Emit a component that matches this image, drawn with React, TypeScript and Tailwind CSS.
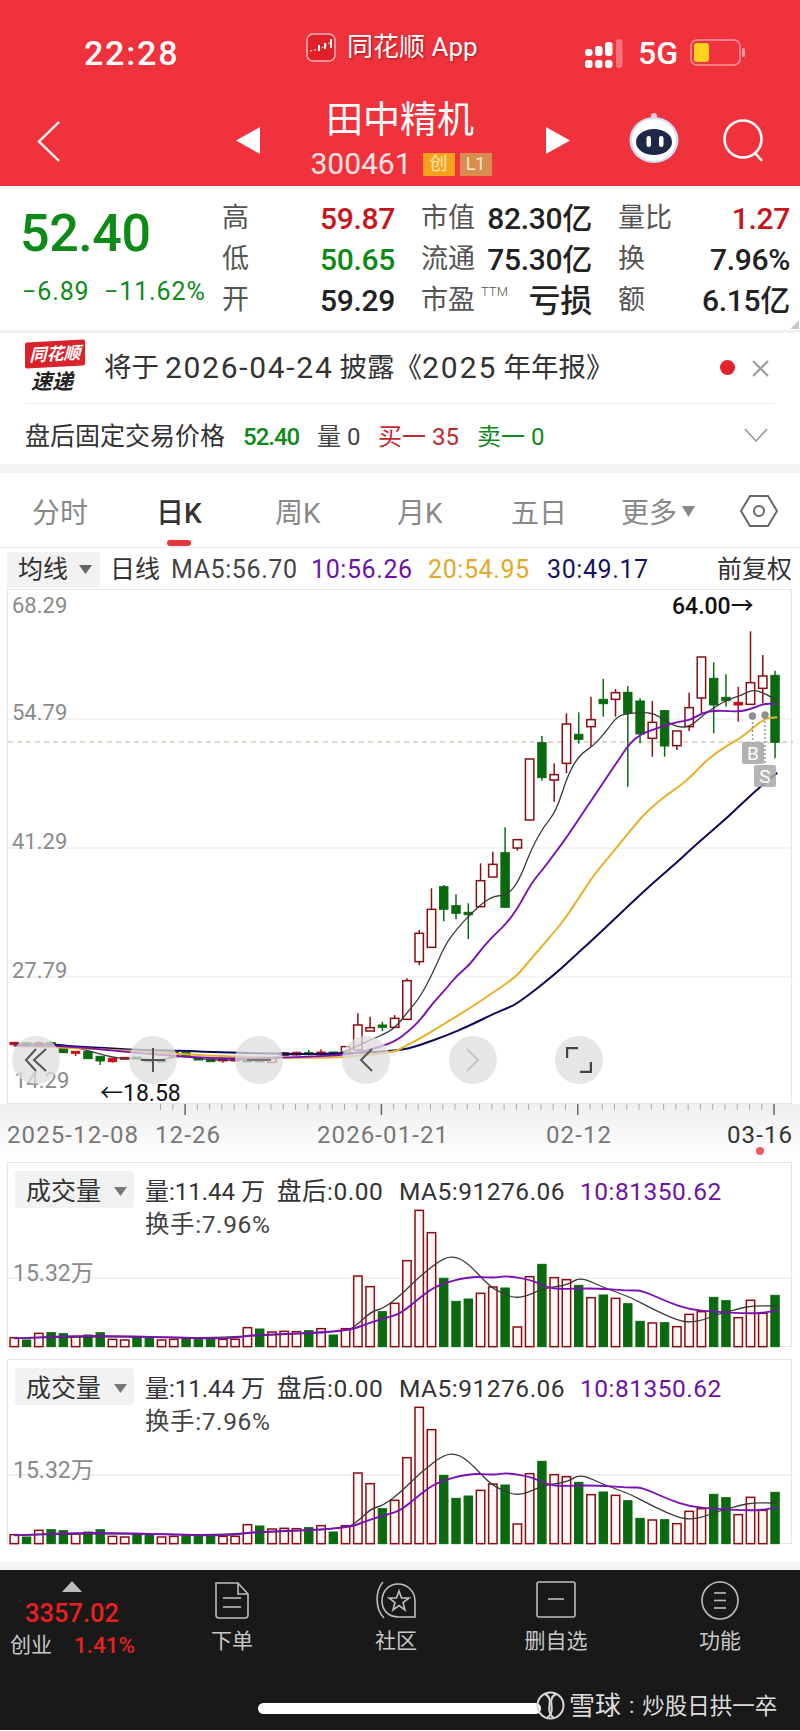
import React from "react";

const z3 = (y: number) => 590 + y / 3;
const z5 = (y: number) => 880 + y / 3;
const cx = (i: number) => 13.3 + 12.27 * i;
const px = (x: number) => 400 + x / 3;

type C = [number, "r" | "g" | "f", number, number, number, number];
const raw3: C[] = [
  [62, "g", 256, 457, 242, 505], [61, "r", 258, 295, 195, 340], [60, "r", 278, 343, 124, 343],
  [59, "f", 337, 345, 290, 395], [58, "g", 322, 332, 253, 350], [57, "g", 265, 345, 217, 430],
  [56, "r", 201, 324, 201, 370], [55, "r", 353, 410, 308, 423], [54, "r", 423, 467, 423, 480],
  [53, "g", 362, 468, 362, 500], [52, "r", 397, 445, 333, 500], [51, "g", 333, 432, 325, 460],
  [50, "g", 307, 370, 288, 590], [49, "r", 308, 328, 297, 380], [48, "g", 328, 341, 267, 380],
  [47, "r", 389, 410, 320, 470], [46, "g", 433, 448, 367, 461], [45, "r", 402, 520, 370, 550],
  [44, "r", 554, 570, 520, 635], [43, "g", 458, 563, 438, 572], [42, "r", 507, 690, 507, 690],
  [41, "r", 749, 774, 749, 782], [40, "g", 788, 952, 712, 952], [39, "r", 823, 861, 785, 861],
  [38, "r", 872, 950, 820, 950],
];
const raw5: C[] = [
  [37, "g", 97, 104, 70, 177], [36, "g", 77, 100, 43, 118], [35, "g", 20, 88, 15, 124],
  [34, "r", 88, 202, 25, 202], [33, "r", 160, 245, 150, 255], [32, "r", 302, 418, 295, 418],
  [31, "r", 415, 442, 405, 442], [30, "g", 435, 442, 425, 453], [29, "r", 443, 453, 410, 453],
  [28, "r", 435, 510, 400, 510], [27, "r", 500, 520, 500, 520], [26, "g", 516, 524, 516, 524],
  [25, "f", 516, 525, 508, 528], [24, "g", 518, 524, 510, 526], [23, "f", 517, 525, 515, 527],
  [22, "f", 518, 526, 518, 526], [21, "r", 535, 547, 535, 547], [20, "g", 538, 546, 538, 546],
  [19, "g", 538, 546, 538, 546], [18, "f", 535, 543, 535, 545], [17, "f", 537, 543, 537, 548],
  [16, "g", 537, 545, 537, 545], [15, "g", 533, 540, 533, 540], [14, "g", 518, 530, 518, 530],
  [13, "r", 517, 528, 517, 528], [12, "g", 540, 546, 540, 546], [11, "g", 538, 545, 538, 545],
  [10, "g", 531, 537, 531, 537], [9, "f", 532, 538, 532, 538], [8, "f", 535, 545, 535, 548],
  [7, "g", 529, 543, 529, 555], [6, "g", 515, 536, 515, 536], [5, "f", 514, 520, 514, 528],
  [4, "g", 505, 518, 505, 518], [3, "g", 488, 495, 484, 495], [2, "f", 488, 498, 484, 498],
  [1, "g", 488, 500, 488, 500], [0, "f", 487, 494, 487, 500],
];

// Smooth curve through the midpoints, as the chart's moving averages are drawn
const line = (pts: [number, number][]) => {
  let d = `M${pts[0][0]} ${pts[0][1]}`;
  for (let i = 1; i < pts.length - 1; i++) {
    const mx = (pts[i][0] + pts[i + 1][0]) / 2;
    const my = (pts[i][1] + pts[i + 1][1]) / 2;
    d += ` Q${pts[i][0]} ${pts[i][1]} ${mx} ${my}`;
  }
  const last = pts[pts.length - 1];
  return d + ` L${last[0]} ${last[1]}`;
};

const ma5 = line([
  ...[492, 492, 492, 492, 495, 502, 512, 522, 532, 535, 535, 540, 540, 530, 530, 535, 540, 540, 540, 540, 540, 535, 525, 522, 522, 522, 522, 515, 497, 480, 465, 445].map(
    (y, i) => [cx(i), z5(y)] as [number, number]
  ),
  [px(21), z5(395)], [px(58), z5(350)], [px(95), z5(280)], [px(132), z5(195)], [px(169), z5(145)], [px(206), z5(105)],
  [px(243), z5(70)], [px(280), z5(47)], [px(317), z5(47)], [px(353), z3(875)], [px(392), z3(775)], [px(428), z3(710)],
  [px(465), z3(665)], [px(502), z3(550)], [px(538), z3(492)], [px(575), z3(470)], [px(612), z3(428)], [px(649), z3(378)],
  [px(686), z3(370)], [px(723), z3(367)], [px(760), z3(370)], [px(797), z3(395)], [px(833), z3(413)], [px(870), z3(408)],
  [px(907), z3(375)], [px(944), z3(350)], [px(981), z3(328)], [px(1018), z3(318)], [px(1055), z3(298)], [px(1092), z3(310)], [px(1129), z3(333)],
]);
const ma10 = line([
  [cx(0), z5(497)], [cx(4), z5(497)], [cx(8), z5(512)], [cx(12), z5(525)], [cx(16), z5(535)], [cx(20), z5(536)], [cx(24), z5(530)],
  [cx(27), z5(525)], [cx(29), z5(510)], [cx(31), z5(485)], [px(21), z5(455)], [px(58), z5(420)], [px(95), z5(370)], [px(132), z5(330)],
  [px(169), z5(285)], [px(206), z5(255)], [px(243), z5(205)], [px(280), z5(165)], [px(317), z5(130)], [px(353), z3(950)], [px(392), z3(878)],
  [px(428), z3(835)], [px(465), z3(785)], [px(502), z3(735)], [px(538), z3(680)], [px(575), z3(625)], [px(612), z3(570)], [px(649), z3(515)],
  [px(686), z3(460)], [px(723), z3(430)], [px(760), z3(418)], [px(797), z3(405)], [px(833), z3(395)], [px(870), z3(390)], [px(907), z3(367)],
  [px(944), z3(362)], [px(981), z3(363)], [px(1018), z3(365)], [px(1055), z3(355)], [px(1092), z3(340)], [px(1129), z3(343)],
]);
const ma20 = line([
  [cx(0), z5(497)], [cx(8), z5(508)], [cx(16), z5(528)], [cx(22), z5(533)], [cx(27), z5(533)], [cx(31), z5(515)], [px(0), z5(505)],
  [px(58), z5(475)], [px(132), z5(430)], [px(206), z5(385)], [px(280), z5(335)], [px(317), z5(310)], [px(350), z5(285)], [px(400), z5(225)],
  [px(465), z5(150)], [px(500), z5(105)], [px(575), z3(860)], [px(612), z3(815)], [px(649), z3(770)], [px(686), z3(725)], [px(723), z3(680)],
  [px(760), z3(645)], [px(797), z3(615)], [px(833), z3(590)], [px(870), z3(560)], [px(907), z3(520)], [px(944), z3(490)], [px(981), z3(465)],
  [px(1018), z3(445)], [px(1055), z3(415)], [px(1092), z3(385)], [px(1129), z3(382)],
]);
const ma30 = line([
  [53, z5(495)], [130, z5(510)], [173, z5(512)], [233, z5(518)], [283, z5(522)], [340, z5(522)], [400, z5(512)],
  [px(58), z5(495)], [px(132), z5(468)], [px(206), z5(437)], [px(280), z5(400)], [px(317), z5(385)], [px(350), z5(370)], [px(460), z5(285)],
  [px(540), z5(210)], [px(580), z5(175)], [px(690), z5(70)], [px(760), z3(875)], [px(830), z3(815)], [px(860), z3(787)], [px(900), z3(751)],
  [px(980), z3(682)], [px(1060), z3(605)], [px(1129), z3(548)],
]);

const volTops: [string, number][] = [
  ["r", 533], ["g", 540], ["r", 520], ["g", 518], ["g", 521], ["r", 530], ["g", 525], ["g", 518], ["r", 538], ["r", 540], ["g", 530], ["g", 530],
  ["r", 540], ["r", 538], ["g", 535], ["g", 538], ["g", 537], ["r", 538], ["r", 538], ["r", 503], ["g", 507], ["r", 516], ["r", 514], ["r", 515],
  ["g", 512], ["r", 506], ["g", 525], ["r", 506], ["r", 348], ["r", 380], ["g", 455], ["r", 430], ["r", 302], ["r", 151], ["r", 218], ["g", 355],
  ["g", 424], ["g", 417], ["r", 400], ["r", 381], ["g", 384], ["r", 501], ["r", 350], ["g", 313], ["r", 353], ["r", 359], ["g", 376], ["r", 413],
  ["g", 405], ["r", 415], ["g", 431], ["g", 484], ["r", 489], ["g", 488], ["r", 500], ["r", 463], ["r", 455], ["g", 412], ["g", 422], ["r", 473],
  ["r", 421], ["r", 460], ["g", 406],
];
const vy = (y: number) => 1160 + y / 3;
const l4 = (x: number) => x / 3;
const vol5 = line(
  ([[40, 535], [300, 528], [600, 535], [800, 525], [1037, 515], [1074, 490], [1110, 455], [1147, 445]] as [number, number][])
    .map(([x, y]) => [l4(x), vy(y)] as [number, number])
    .concat(
      ([[0, 405], [60, 345], [130, 292], [169, 291], [206, 315], [265, 378], [300, 398], [353, 418], [428, 385], [500, 375], [538, 350], [612, 385], [686, 410], [760, 450], [833, 482], [870, 487], [907, 480], [944, 465], [1018, 445], [1055, 437], [1129, 438]] as [number, number][]).map(([x, y]) => [px(x), vy(y)] as [number, number])
    )
);
const vol10 = line(
  ([[40, 535], [150, 530], [300, 527], [600, 535], [700, 535], [750, 525], [1037, 515], [1100, 490], [1160, 472]] as [number, number][])
    .map(([x, y]) => [l4(x), vy(y)] as [number, number])
    .concat(
      ([[0, 460], [60, 410], [110, 375], [206, 349], [280, 354], [317, 347], [392, 360], [428, 378], [465, 388], [575, 384], [686, 392], [723, 391], [797, 425], [870, 450], [944, 455], [1055, 462], [1129, 452]] as [number, number][]).map(([x, y]) => [px(x), vy(y)] as [number, number])
    )
);

function Candle({ c, f }: { c: C; f: (y: number) => number }) {
  const [i, t, top, bot, wt, wb] = c;
  const x = cx(i);
  const col = t === "g" ? "#0b6a10" : t === "f" ? "#c20f18" : "#8a0d12";
  const fill = t === "r" ? "#ffffff" : col;
  return (
    <g>
      <line x1={x} x2={x} y1={f(wt)} y2={f(wb)} stroke={col} strokeWidth={1.5} />
      <rect x={x - 4.2} y={f(top)} width={8.4} height={Math.max(f(bot) - f(top), 2)} fill={fill} stroke={col} strokeWidth={t === "r" ? 1.5 : 1} />
    </g>
  );
}

function KChart() {
  return (
    <svg className="absolute inset-0" width={785} height={515} viewBox="7 590 785 515">
      {[719, 848, 977].map((y) => (
        <line key={y} x1={7} x2={792} y1={y} y2={y} stroke="#e8e8e8" strokeWidth={1} />
      ))}
      <line x1={7} x2={792} y1={742} y2={742} stroke="#c2ad94" strokeWidth={1} strokeDasharray="5 4" />
      {raw5.map((c) => (
        <Candle key={c[0]} c={c} f={z5} />
      ))}
      {raw3.map((c) => (
        <Candle key={c[0]} c={c} f={z3} />
      ))}
      <path d={ma5} fill="none" stroke="#3a3a3a" strokeWidth={1.3} />
      <path d={ma30} fill="none" stroke="#0a0a58" strokeWidth={2} />
      <path d={ma20} fill="none" stroke="#e6b12c" strokeWidth={2} />
      <path d={ma10} fill="none" stroke="#7a10b4" strokeWidth={1.9} />
      <line x1={751.5} x2={751.5} y1={718} y2={745} stroke="#999" strokeWidth={1.5} strokeDasharray="2 2" />
      <line x1={764} x2={764} y1={717} y2={768} stroke="#999" strokeWidth={1.5} strokeDasharray="2 2" />
      <circle cx={751.5} cy={716} r={3.7} fill="#8e8e8e" />
      <circle cx={764} cy={715} r={3.7} fill="#8e8e8e" />
      <rect x={741} y={742} width={22} height={22} rx={2} fill="#a8a8a8" fillOpacity={0.9} />
      <text x={752} y={760} textAnchor="middle" fontSize={19} fill="#fff" fontFamily="Roboto">B</text>
      <rect x={753} y={765} width={22} height={22} rx={2} fill="#a8a8a8" fillOpacity={0.85} />
      <text x={764} y={783} textAnchor="middle" fontSize={19} fill="#fff" fontFamily="Roboto">S</text>
    </svg>
  );
}

function Ticks() {
  const items = [];
  for (let i = 12; i <= 62; i++) {
    const major = (i - 14) % 16 === 0;
    items.push(
      <line key={i} x1={cx(i)} x2={cx(i)} y1={0} y2={major ? 11 : 6} stroke={major ? "#666" : "#aaa"} strokeWidth={major ? 1.5 : 1} />
    );
  }
  return (
    <svg className="absolute inset-0" width={800} height={55}>
      {items}
    </svg>
  );
}

function VolChart() {
  return (
    <svg className="absolute inset-0" width={785} height={185} viewBox="7 1163 785 185">
      <line x1={7} x2={792} y1={1278} y2={1278} stroke="#e4e4e4" strokeWidth={1} />
      {volTops.map(([t, top], i) => (
        <rect
          key={i}
          x={cx(i) - 4.2}
          y={vy(top)}
          width={8.4}
          height={vy(560) - vy(top)}
          fill={t === "g" ? "#0b6a10" : "#fff6f6"}
          stroke={t === "g" ? "#0b6a10" : "#8a0d12"}
          strokeWidth={t === "g" ? 1 : 1.5}
        />
      ))}
      <path d={vol5} fill="none" stroke="#3a3a3a" strokeWidth={1.3} />
      <path d={vol10} fill="none" stroke="#7a10b4" strokeWidth={1.9} />
    </svg>
  );
}

function VolPanel() {
  return (
    <div className="relative h-[185px] w-[785px] border border-[#e6e6e6] bg-white">
      <VolChart />
      <div className="absolute left-[7px] top-[8px] flex h-[37px] w-[119px] items-center rounded-[4px] bg-[#f2f2f2] pl-[11px] pt-[3px] text-[25px] leading-none text-[#333]">
        成交量
        <svg className="ml-[13px]" width={13} height={9}><polygon points="0,0 13,0 6.5,9" fill="#777" /></svg>
      </div>
      <div className="absolute left-[137px] top-[14px] flex text-[24.5px] leading-[30px] tracking-[0.5px] text-[#333]">
        <span className="w-[132px] text-[24px] tracking-normal">量:11.44 万</span>
        <span className="w-[122px]">盘后:0.00</span>
        <span className="w-[181px]">MA5:91276.06</span>
        <span className="text-[#6d12a6]">10:81350.62</span>
      </div>
      <div className="absolute left-[137px] top-[47px] text-[24.5px] leading-[30px] tracking-[0.6px] text-[#444]">换手:7.96%</div>
      <div className="absolute left-[5px] top-[96px] text-[23px] leading-[30px] text-[#8a8a8a]">15.32万</div>
    </div>
  );
}

function Cell({ label, value, color, big }: { label: React.ReactNode; value: string; color: string; big?: boolean }) {
  return (
    <div className="flex items-center justify-between">
      <span className="text-[27px] leading-none text-[#555]">{label}</span>
      <span className={`${big ? "text-[32px]" : "text-[30px]"} font-medium leading-none tracking-[-0.3px] ${color}`}>{value}</span>
    </div>
  );
}

function RoundBtn({ className, children }: { className: string; children: React.ReactNode }) {
  return (
    <div className={`absolute top-[446px] flex h-[48px] w-[48px] items-center justify-center rounded-full bg-[#dedede]/75 ${className}`}>
      {children}
    </div>
  );
}

export default function App() {
  return (
    <div className="relative h-[1731px] w-[800px] overflow-hidden bg-white [font-family:Roboto,'Noto_Sans_CJK_SC',sans-serif]">
      {/* red header */}
      <header className="relative h-[186px] bg-[#ef323c] text-white">
        <div className="relative h-[92px]">
          <span className="absolute left-[84px] top-[33px] text-[34px] font-medium leading-[40px] tracking-[1.8px]">22:28</span>
          <div className="absolute left-[306px] top-[32px] flex items-center">
            <svg width={30} height={29} viewBox="0 0 30 29">
              <rect x={1} y={1} width={28} height={27} rx={6} fill="#e02029" stroke="#f9b0b4" strokeWidth={1.5} />
              <polyline points="4,18 9,17 14,16 19,13 25,9" fill="none" stroke="#fff" strokeWidth={1} strokeDasharray="2 2" />
              <rect x={12} y={12} width={2} height={6} fill="#fff" />
              <rect x={18} y={10} width={2} height={6} fill="#fff" />
              <rect x={24} y={6} width={2} height={9} fill="#fff" />
            </svg>
            <span className="ml-[11px] whitespace-nowrap text-[26px] leading-[30px] [text-shadow:1px_1px_2px_rgba(90,0,0,0.5)]">同花顺 App</span>
          </div>
          <svg className="absolute left-[585px] top-[39px]" width={38} height={29}>
            {[0, 1, 2].map((k) => (
              <rect key={k} x={k * 10} y={21} width={7.5} height={8} rx={3} fill="#fff" />
            ))}
            <rect x={0} y={10} width={7.5} height={7} rx={3} fill="#fff" />
            <rect x={10} y={7} width={7.5} height={10} rx={3} fill="#fff" />
            <rect x={20} y={3} width={7.5} height={14} rx={3} fill="#fff" />
            <rect x={31} y={0} width={6.5} height={29} rx={3} fill="#f77379" />
          </svg>
          <span className="absolute left-[638px] top-[33px] text-[32px] font-medium leading-[40px]">5G</span>
          <svg className="absolute left-[690px] top-[39px]" width={56} height={28}>
            <rect x={1} y={1} width={49} height={25} rx={6} fill="none" stroke="#f79a9e" strokeWidth={1.5} />
            <rect x={4} y={4} width={15} height={19} rx={3} fill="#ffd21f" />
            <rect x={52} y={9} width={3} height={9} rx={1.5} fill="#f79a9e" />
          </svg>
        </div>
        <div className="relative h-[94px]">
          <svg className="absolute left-[37px] top-[29px]" width={24} height={41} fill="none" stroke="#fff" strokeWidth={2.4}>
            <polyline points="22,1 2,20.5 22,40" />
          </svg>
          <svg className="absolute left-[236px] top-[35px]" width={24} height={27}><polygon points="24,0 24,27 0,13.5" fill="#fff" /></svg>
          <svg className="absolute left-[546px] top-[35px]" width={24} height={27}><polygon points="0,0 24,13.5 0,27" fill="#fff" /></svg>
          <div className="flex flex-col items-center">
            <span className="mt-[7px] text-[37px] leading-[44px]">田中精机</span>
            <div className="ml-[2px] mt-[4px] flex items-center">
              <span className="text-[30px] leading-[34px] text-[#fde4e4]">300461</span>
              <span className="ml-[11px] flex h-[23px] w-[32px] items-center justify-center bg-[#f8a11f] text-[18px] leading-none text-[#ffe9b8]">创</span>
              <span className="ml-[5px] flex h-[23px] w-[32px] items-center justify-center bg-[#d98c4e] text-[18px] leading-none text-[#ffe9d0]">L1</span>
            </div>
          </div>
          <svg className="absolute left-[628px] top-[20px]" width={52} height={56} viewBox="0 0 52 56">
            <circle cx={26} cy={4} r={3} fill="#f4c8d4" />
            <line x1={26} y1={5} x2={26} y2={10} stroke="#e8e8f4" strokeWidth={2} />
            <ellipse cx={26} cy={28} rx={24.5} ry={23} fill="#cfdcf8" />
            <ellipse cx={26} cy={28} rx={22} ry={21} fill="#fff" />
            <ellipse cx={26} cy={30} rx={18} ry={13} fill="#1d2748" />
            <rect x={18.5} y={24} width={4.5} height={11} rx={2.2} fill="#fff" />
            <rect x={31} y={24} width={4.5} height={11} rx={2.2} fill="#fff" />
          </svg>
          <svg className="absolute left-[722px] top-[27px]" width={44} height={44} fill="none" stroke="#fff" strokeWidth={2.6}>
            <circle cx={21} cy={20} r={18.5} />
            <line x1={33} y1={34} x2={40} y2={42} />
          </svg>
        </div>
      </header>

      {/* quote */}
      <section className="relative flex h-[144px] pt-[10px]">
        <div className="w-[222px] pl-[20px]">
          <div className="mt-[6px] text-[52px] font-medium leading-[64px] tracking-[-0.4px] text-[#0d8a17]">52.40</div>
          <div className="ml-[2px] mt-[11px] flex text-[25px] leading-[30px] tracking-[0.9px] text-[#0d8a17]">
            <span className="w-[82px]">−6.89</span>
            <span>−11.62%</span>
          </div>
        </div>
        <div className="mt-[2px] grid h-[123px] grid-cols-[173px_171px_172px] grid-rows-3 gap-x-[26px]">
          <Cell label="高" value="59.87" color="text-[#c8161d]" />
          <Cell label="市值" value="82.30亿" color="text-[#222]" />
          <Cell label="量比" value="1.27" color="text-[#c8161d]" />
          <Cell label="低" value="50.65" color="text-[#0d8a17]" />
          <Cell label="流通" value="75.30亿" color="text-[#222]" />
          <Cell label="换" value="7.96%" color="text-[#222]" />
          <Cell label="开" value="59.29" color="text-[#222]" />
          <Cell
            label={
              <span className="flex items-start">
                市盈<span className="ml-[6px] text-[13px] font-light leading-[10px] text-[#555]">TTM</span>
              </span>
            }
            value="亏损"
            color="text-[#222]"
            big
          />
          <Cell label="额" value="6.15亿" color="text-[#222]" />
        </div>
        <svg className="absolute bottom-[1px] right-[1px]" width={9} height={9}><polygon points="9,0 9,9 0,9" fill="#c8c8c8" /></svg>
      </section>

      {/* notice */}
      <section className="border-t-[3px] border-[#f0f0f0]">
        <div className="relative mx-[25px] flex h-[71px] items-center border-b border-[#ececec]">
          <div className="relative h-[54px] w-[62px]">
            <div className="flex h-[26px] w-[60px] -skew-y-3 items-center justify-center rounded-[2px] bg-[#d9232b] text-[17px] font-bold italic leading-none text-white">同花顺</div>
            <div className="mt-[3px] pl-[6px] text-[21px] font-bold italic leading-[24px] text-[#222]">速递</div>
          </div>
          <span className="ml-[17px] flex items-center whitespace-nowrap text-[27.5px] leading-[34px] text-[#333]">
            将于
            <span className="mx-[6px] text-[30px] tracking-[1.7px]">2026-04-24</span>
            披露《
            <span className="text-[30px] tracking-[2px]">2025</span>
            <span className="ml-[6px]">年年报》</span>
          </span>
          <span className="absolute left-[695px] top-[27px] h-[15px] w-[15px] rounded-full bg-[#e3232c]" />
          <svg className="absolute left-[727px] top-[27px]" width={17} height={17} stroke="#999" strokeWidth={2}>
            <line x1={1} y1={1} x2={16} y2={16} />
            <line x1={16} y1={1} x2={1} y2={16} />
          </svg>
        </div>
        <div className="relative flex h-[60px] items-center pl-[25px] pt-[5px] text-[24px] leading-none">
          <span className="w-[218px] text-[25px] text-[#333]">盘后固定交易价格</span>
          <span className="w-[74px] font-medium tracking-[-1px] text-[#0d8a17]">52.40</span>
          <span className="w-[61px] text-[#444]">量 0</span>
          <span className="w-[99px] text-[#c0282d]">买一 35</span>
          <span className="text-[#0d8a17]">卖一 0</span>
          <svg className="absolute left-[744px] top-[24px]" width={24} height={14} fill="none" stroke="#999" strokeWidth={1.6}>
            <polyline points="1,1 12,13 23,1" />
          </svg>
        </div>
      </section>
      <div className="h-[9px] bg-[#f3f3f3]" />

      {/* tabs */}
      <nav className="relative h-[75px] border-b border-[#e8e8e8] text-[28px] leading-none text-[#888]">
        <span className="absolute left-[32px] top-[27px]">分时</span>
        <span className="absolute left-[156px] top-[27px] font-medium text-[#333]">日K</span>
        <span className="absolute left-[167px] top-[67px] h-[6px] w-[24px] rounded-full bg-[#e8353c]" />
        <span className="absolute left-[275px] top-[27px]">周K</span>
        <span className="absolute left-[397px] top-[27px]">月K</span>
        <span className="absolute left-[511px] top-[27px]">五日</span>
        <span className="absolute left-[621px] top-[27px]">更多</span>
        <svg className="absolute left-[682px] top-[33px]" width={13} height={11}><polygon points="0,0 13,0 6.5,11" fill="#888" /></svg>
        <svg className="absolute left-[740px] top-[21px]" width={38} height={34} fill="none" stroke="#666" strokeWidth={2}>
          <polygon points="10,2 28,2 37,17 28,32 10,32 1,17" />
          <circle cx={19} cy={17} r={5} />
        </svg>
      </nav>

      {/* MA row */}
      <div className="relative flex h-[41px] items-center pl-[7px] pt-[2px] text-[25px] leading-none text-[#333]">
        <div className="flex h-[36px] w-[93px] items-center rounded-[2px] bg-[#f2f2f2] pl-[11px]">
          均线
          <svg className="ml-[11px]" width={13} height={9}><polygon points="0,0 13,0 6.5,9" fill="#666" /></svg>
        </div>
        <span className="ml-[10px] w-[61px]">日线</span>
        <span className="w-[140px] tracking-[0.6px] text-[#444]">MA5:56.70</span>
        <span className="w-[117px] tracking-[0.6px] text-[#6d12a6]">10:56.26</span>
        <span className="w-[119px] tracking-[0.6px] text-[#e0a92b]">20:54.95</span>
        <span className="tracking-[0.6px] text-[#14145e]">30:49.17</span>
        <span className="absolute left-[717px]">前复权</span>
      </div>

      {/* K chart */}
      <div className="pl-[7px]">
        <div className="relative h-[515px] w-[785px] border border-[#e6e6e6] bg-white">
          <KChart />
          <span className="absolute left-[4px] top-[2px] text-[22px] leading-[28px] text-[#8a8a8a]">68.29</span>
          <span className="absolute left-[4px] top-[109px] text-[22px] leading-[28px] text-[#8a8a8a]">54.79</span>
          <span className="absolute left-[4px] top-[238px] text-[22px] leading-[28px] text-[#8a8a8a]">41.29</span>
          <span className="absolute left-[4px] top-[367px] text-[22px] leading-[28px] text-[#8a8a8a]">27.79</span>
          <span className="absolute left-[6px] top-[477px] text-[22px] leading-[28px] text-[#8a8a8a]">14.29</span>
          <span className="absolute left-[664px] top-[3px] text-[23px] font-medium leading-[28px] text-[#111]">64.00→</span>
          <span className="absolute left-[92px] top-[490px] text-[23px] leading-[28px] text-[#111]">←18.58</span>

          <RoundBtn className="left-[4px]">
            <svg width={24} height={24} fill="none" stroke="#555" strokeWidth={2}>
              <polyline points="12,1 2,12 12,23" />
              <polyline points="22,1 10,12 22,23" />
            </svg>
          </RoundBtn>
          <RoundBtn className="left-[121px]">
            <svg width={24} height={24} stroke="#555" strokeWidth={2}>
              <line x1={12} y1={0} x2={12} y2={24} />
              <line x1={0} y1={12} x2={24} y2={12} />
            </svg>
          </RoundBtn>
          <RoundBtn className="left-[227px]">
            <svg width={24} height={4} stroke="#777" strokeWidth={2}>
              <line x1={0} y1={2} x2={24} y2={2} />
            </svg>
          </RoundBtn>
          <RoundBtn className="left-[334px]">
            <svg width={14} height={24} fill="none" stroke="#555" strokeWidth={2}>
              <polyline points="13,1 2,12 13,23" />
            </svg>
          </RoundBtn>
          <RoundBtn className="left-[441px]">
            <svg width={14} height={24} fill="none" stroke="#c4c4c4" strokeWidth={2}>
              <polyline points="1,1 12,12 1,23" />
            </svg>
          </RoundBtn>
          <RoundBtn className="left-[547px]">
            <svg width={26} height={26} fill="none" stroke="#444" strokeWidth={2.4}>
              <polyline points="1,11 1,1 12,1" />
              <polyline points="25,15 25,25 14,25" />
            </svg>
          </RoundBtn>
        </div>
      </div>

      {/* time axis */}
      <div className="relative h-[55px] bg-gradient-to-b from-[#efefef] to-white text-[24px] leading-[28px] tracking-[1.1px] text-[#777]">
        <Ticks />
        <span className="absolute left-[7px] top-[17px]">2025-12-08</span>
        <span className="absolute left-[155px] top-[17px]">12-26</span>
        <span className="absolute left-[317px] top-[17px]">2026-01-21</span>
        <span className="absolute left-[546px] top-[17px]">02-12</span>
        <span className="absolute left-[727px] top-[17px] text-[#333]">03-16</span>
        <span className="absolute left-[756px] top-[43px] h-[8px] w-[8px] rounded-full bg-[#ee5b63]" />
      </div>

      {/* volume panels */}
      <div className="flex flex-col gap-[12px] pl-[7px] pt-[3px]">
        <VolPanel />
        <VolPanel />
      </div>
      <div className="mt-[18px] h-[8px] bg-[#f3f3f3]" />

      {/* bottom bar */}
      <footer className="relative h-[160px] bg-[#191919] text-[#c8c8c8]">
        <div className="grid grid-cols-[146px_172px_156px_164px_160px]">
          <div className="relative h-[90px]">
            <svg className="absolute left-[62px] top-[11px]" width={20} height={11}><polygon points="10,0 20,11 0,11" fill="#bcbcbc" /></svg>
            <span className="absolute left-[25px] top-[28px] text-[25.5px] font-medium leading-[30px] text-[#e8211f]">3357.02</span>
            <span className="absolute left-[10px] top-[62px] text-[21px] leading-[26px]">创业</span>
            <span className="absolute left-[74px] top-[60px] text-[22.5px] font-medium leading-[30px] text-[#e8211f]">1.41%</span>
          </div>
          <div className="flex flex-col items-center pt-[11px]">
            <svg width={36} height={39} fill="none" stroke="#bdbdbd" strokeWidth={1.6}>
              <path d="M2 2 H24 L34 13 V34 Q34 37 31 37 H5 Q2 37 2 34 Z" />
              <path d="M24 2 V13 H34" />
              <line x1={9} y1={17} x2={27} y2={17} />
              <line x1={9} y1={26} x2={27} y2={26} />
            </svg>
            <span className="mt-[8px] text-[21px] leading-[26px]">下单</span>
          </div>
          <div className="flex flex-col items-center pt-[11px]">
            <svg width={44} height={39} fill="none" stroke="#bdbdbd" strokeWidth={1.6}>
              <path d="M9 1 C1 10 1 28 10 37" />
              <path d="M24 3 C33 3 41 10 41 20 V36 H25 C14 36 8 29 8 20 C8 10 15 3 24 3 Z" />
              <polygon points="25,10 27.5,17 35,17 29,21.5 31,29 25,24.5 19,29 21,21.5 15,17 22.5,17" />
            </svg>
            <span className="mt-[8px] text-[21px] leading-[26px]">社区</span>
          </div>
          <div className="flex flex-col items-center pt-[11px]">
            <svg width={40} height={37} fill="none" stroke="#bdbdbd" strokeWidth={1.6} className="mb-[2px]">
              <rect x={1} y={1} width={38} height={35} rx={2} />
              <line x1={12} y1={18} x2={28} y2={18} />
            </svg>
            <span className="mt-[8px] text-[21px] leading-[26px]">删自选</span>
          </div>
          <div className="flex flex-col items-center pl-[4px] pt-[11px]">
            <svg width={38} height={39} fill="none" stroke="#bdbdbd" strokeWidth={1.6}>
              <ellipse cx={19} cy={19.5} rx={18} ry={18.5} />
              <line x1={13} y1={12} x2={25} y2={12} />
              <line x1={13} y1={19.5} x2={25} y2={19.5} />
              <line x1={13} y1={27} x2={25} y2={27} />
            </svg>
            <span className="mt-[8px] text-[21px] leading-[26px]">功能</span>
          </div>
        </div>
        <div className="ml-[258px] mt-[43px] h-[11px] w-[283px] rounded-full bg-white" />
        <div className="absolute left-[536px] top-[119px] flex items-center">
          <svg width={29} height={29} fill="none" stroke="#d8d8d8" strokeWidth={2}>
            <circle cx={14.5} cy={14.5} r={13} />
            <path d="M9 3 C20 9 7 19 18 27" />
            <path d="M20 3 C9 9 22 19 11 27" />
          </svg>
          <span className="ml-[4px] flex items-center whitespace-nowrap pt-[2px] text-[26px] leading-[30px] text-[#dcdcdc]">
            雪球
            <span className="mx-[8px] text-[22px]">:</span>
            <span className="text-[22.5px]">炒股日拱一卒</span>
          </span>
        </div>
      </footer>
    </div>
  );
}
